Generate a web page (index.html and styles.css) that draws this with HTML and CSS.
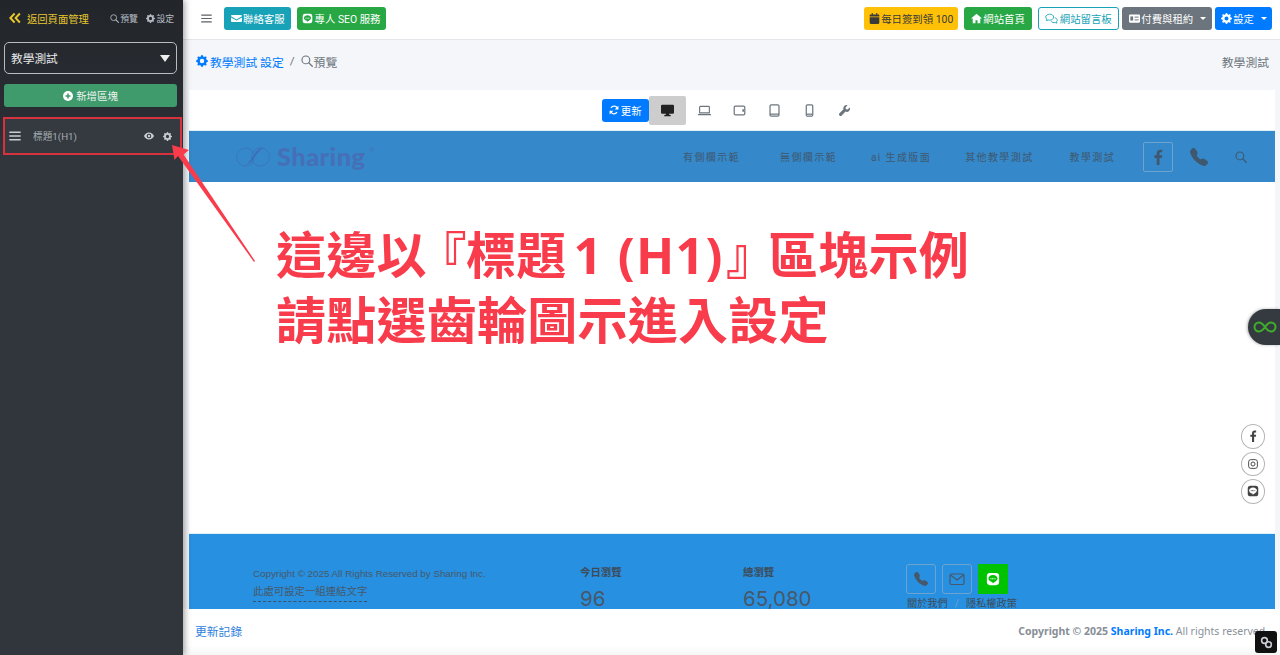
FILE: index.html
```html
<!DOCTYPE html>
<html lang="zh-Hant">
<head>
<meta charset="utf-8">
<title>教學測試 設定</title>
<link rel="stylesheet" href="styles.css">
</head>
<body>
<svg class="sprite" aria-hidden="true">
  <symbol id="gear" viewBox="0 0 16 16"><path fill="currentColor" d="M9.405 1.05c-.413-1.4-2.397-1.4-2.81 0l-.1.34a1.464 1.464 0 0 1-2.105.872l-.31-.17c-1.283-.698-2.686.705-1.987 1.987l.169.311c.446.82.023 1.841-.872 2.105l-.34.1c-1.4.413-1.4 2.397 0 2.81l.34.1a1.464 1.464 0 0 1 .872 2.105l-.17.31c-.698 1.283.705 2.686 1.987 1.987l.311-.169a1.464 1.464 0 0 1 2.105.872l.1.34c.413 1.4 2.397 1.4 2.81 0l.1-.34a1.464 1.464 0 0 1 2.105-.872l.31.17c1.283.698 2.686-.705 1.987-1.987l-.169-.311a1.464 1.464 0 0 1 .872-2.105l.34-.1c1.4-.413 1.4-2.397 0-2.81l-.34-.1a1.464 1.464 0 0 1-.872-2.105l.17-.31c.698-1.283-.705-2.686-1.987-1.987l-.311.169a1.464 1.464 0 0 1-2.105-.872l-.1-.34zM8 10.93a2.929 2.929 0 1 1 0-5.86 2.929 2.929 0 0 1 0 5.858z"/></symbol>
  <symbol id="search" viewBox="0 0 16 16"><circle cx="6.5" cy="6.500" r="5.200" fill="none" stroke="currentColor" stroke-width="1.500"/><path d="M10.500 10.500L15 15" stroke="currentColor" stroke-width="1.800" stroke-linecap="round"/></symbol>
  <symbol id="phone" viewBox="0 0 16 16"><path fill="currentColor" d="M1.885.511a1.745 1.745 0 0 1 2.61.163L6.29 2.98c.329.423.445.974.315 1.494l-.547 2.19a.678.678 0 0 0 .178.643l2.457 2.457a.678.678 0 0 0 .644.178l2.189-.547a1.745 1.745 0 0 1 1.494.315l2.306 1.794c.829.645.905 1.87.163 2.611l-1.034 1.034c-.74.74-1.846 1.065-2.877.702a18.634 18.634 0 0 1-7.01-4.42 18.634 18.634 0 0 1-4.42-7.009c-.362-1.03-.037-2.137.703-2.877L1.885.511z"/></symbol>
  <symbol id="fb" viewBox="0 0 16 16"><path fill="currentColor" d="M9.500 16V9h2.300l.4-2.700H9.500V4.600c0-.8.2-1.300 1.300-1.300h1.400V.9C12 .9 11.100.8 10.200.8 8.100.8 6.700 2 6.700 4.300v2H4.400V9h2.300v7z"/></symbol>
  <symbol id="line" viewBox="0 0 16 16"><rect x="1" y="1" width="14" height="14" rx="3.500" fill="currentColor"/><path fill="var(--line-bubble, #fff)" d="M8 3.300c-2.900 0-5.200 1.800-5.200 4.100 0 2 1.900 3.700 4.300 4 .5.100.4.700.3 1.300 0 .2.100.3.400.2 1.300-.7 5.400-3.200 5.400-5.500 0-2.300-2.300-4.100-5.200-4.100z"/><path d="M5 7.600h6" stroke="currentColor" stroke-width="1.200" stroke-dasharray="1.300 .5"/></symbol>
  <symbol id="bars" viewBox="0 0 16 16"><path d="M1 3h14M1 8h14M1 13h14" stroke="currentColor" stroke-width="1.700" stroke-linecap="round"/></symbol>
</svg>

<div class="app">
  <aside class="side">
    <div class="side-top">
      <a class="back"><svg class="ic-back" viewBox="0 0 16 16"><path d="M7.500 2L1.800 8l5.700 6M14.500 2L8.800 8l5.700 6" fill="none" stroke="currentColor" stroke-width="2.600"/></svg>返回頁面管理</a>
      <span class="side-links">
        <a class="side-link"><svg class="ic9"><use href="#search"/></svg>預覽</a>
        <a class="side-link"><svg class="ic9"><use href="#gear"/></svg>設定</a>
      </span>
    </div>
    <div class="side-select"><span class="select-label">教學測試</span><i class="tri"></i></div>
    <a class="side-add"><svg class="ic10" viewBox="0 0 16 16"><circle cx="8" cy="8" r="8" fill="#fff"/><path d="M8 4v8M4 8h8" stroke="#3f9a6c" stroke-width="2.400"/></svg>新增區塊</a>
    <div class="side-item">
      <svg class="ic-bars"><use href="#bars"/></svg>
      <span class="item-name">標題1(H1)</span>
      <svg class="ic-eye" viewBox="0 0 16 12"><path fill="currentColor" d="M8 .5C4.500.5 1.500 2.700 0 6c1.500 3.300 4.500 5.500 8 5.500s6.500-2.200 8-5.500C14.500 2.700 11.500.5 8 .5zm0 9.200A3.700 3.700 0 1 1 8 2.300a3.700 3.700 0 0 1 0 7.400z"/><circle cx="8" cy="6" r="2" fill="currentColor"/></svg>
      <svg class="ic-item-gear"><use href="#gear"/></svg>
    </div>
  </aside>

  <main class="main">
    <header class="topbar">
      <svg class="ic-menu"><use href="#bars"/></svg>
      <a class="btn btn-info"><svg class="ic11" viewBox="0 0 16 16"><path fill="currentColor" d="M0 4.500A1.500 1.500 0 0 1 1.500 3h13A1.500 1.500 0 0 1 16 4.500v.3L8 9.300 0 4.800zM0 6.400v5.100A1.500 1.500 0 0 0 1.500 13h13a1.500 1.500 0 0 0 1.500-1.500V6.400l-8 4.500z"/></svg>聯絡客服</a>
      <a class="btn btn-green btn-seo"><svg class="ic11 line-green"><use href="#line"/></svg>專人 SEO 服務</a>
      <span class="top-spacer"></span>
      <a class="btn btn-yellow"><svg class="ic11" viewBox="0 0 16 16"><path fill="currentColor" d="M4 0h1.500v2h5V0H12v2h2a1 1 0 0 1 1 1v2H1V3a1 1 0 0 1 1-1h2zM1 6h14v8a2 2 0 0 1-2 2H3a2 2 0 0 1-2-2z"/></svg>每日簽到領 100</a>
      <a class="btn btn-green btn-home"><svg class="ic11" viewBox="0 0 16 16"><path fill="currentColor" d="M8 1L0 8h2.500v7h4v-4.500h3V15h4V8H16z"/></svg>網站首頁</a>
      <a class="btn btn-outline"><svg class="ic13" viewBox="0 0 18 16"><path d="M6.500 2C3.500 2 1 3.800 1 6c0 1.100.6 2 1.500 2.800L2 11l2.500-1c.6.200 1.300.3 2 .3 3 0 5.500-1.900 5.500-4.300S9.500 2 6.500 2z" fill="none" stroke="currentColor" stroke-width="1.200"/><path d="M13.500 7c2 .4 3.500 1.700 3.500 3.300 0 .9-.4 1.600-1 2.200l.4 2-2.200-.9c-2 .5-4.700 0-5.700-1.800" fill="none" stroke="currentColor" stroke-width="1.200"/></svg>網站留言板</a>
      <a class="btn btn-gray"><svg class="ic11" viewBox="0 0 16 12"><rect width="16" height="12" rx="1.500" fill="currentColor"/><rect x="2" y="3" width="4" height="6" fill="#6c757d"/><path d="M8 4h6M8 8h6" stroke="#6c757d" stroke-width="1.400"/></svg>付費與租約<i class="caret"></i></a>
      <a class="btn btn-blue btn-end"><svg class="ic11"><use href="#gear"/></svg>設定<i class="caret"></i></a>
    </header>

    <div class="crumbs">
      <nav class="crumb-left">
        <a class="crumb-link"><svg class="ic12"><use href="#gear"/></svg>教學測試 設定</a>
        <span class="crumb-sep">/</span>
        <span class="crumb-cur"><svg class="ic12"><use href="#search"/></svg>預覽</span>
      </nav>
      <span class="crumb-right">教學測試</span>
    </div>

    <section class="preview">
      <div class="devices">
        <a class="btn btn-blue refresh"><svg class="ic10" viewBox="0 0 16 16"><path d="M14 6.500A6 6 0 0 0 3.200 4.500M2 9.500a6 6 0 0 0 10.800 2" fill="none" stroke="currentColor" stroke-width="2"/><path fill="currentColor" d="M15 1v6h-6zM1 15V9h6z"/></svg>更新</a>
        <span class="dev dev-on"><svg class="ic13" viewBox="0 0 16 14"><path fill="currentColor" d="M1.500 0h13A1.500 1.500 0 0 1 16 1.500v8a1.500 1.500 0 0 1-1.500 1.500H10l.4 1.500H12V14H4v-1.500h1.600L6 11H1.500A1.500 1.500 0 0 1 0 9.500v-8A1.500 1.500 0 0 1 1.500 0z"/></svg></span>
        <span class="dev"><svg class="ic13" viewBox="0 0 16 12"><path d="M3 1h10a1 1 0 0 1 1 1v7H2V2a1 1 0 0 1 1-1zM0 11h16" fill="none" stroke="currentColor" stroke-width="1.400"/></svg></span>
        <span class="dev"><svg class="ic13" viewBox="0 0 16 13"><rect x="1.500" y="1" width="13" height="11" rx="1.500" fill="none" stroke="currentColor" stroke-width="1.500"/><path d="M12.500 5v3" stroke="currentColor" stroke-width="2"/></svg></span>
        <span class="dev"><svg class="ic13" viewBox="0 0 16 16"><rect x="2.500" y="1" width="11" height="14" rx="1.500" fill="none" stroke="currentColor" stroke-width="1.500"/><path d="M2.500 12.500h11" stroke="currentColor" stroke-width="1.500"/></svg></span>
        <span class="dev"><svg class="ic13" viewBox="0 0 16 16"><rect x="4" y="1" width="8" height="14" rx="1.500" fill="none" stroke="currentColor" stroke-width="1.500"/><path d="M4 12.500h8" stroke="currentColor" stroke-width="1.500"/></svg></span>
        <span class="dev"><svg class="ic11" viewBox="0 0 16 16"><path fill="currentColor" d="M15.500 3.500l-3 3-2.500-.5-.5-2.500 3-3a4.500 4.500 0 0 0-6 5.500L.7 12a2.300 2.300 0 0 0 3.300 3.300l5.500-5.800a4.500 4.500 0 0 0 6-6z"/></svg></span>
      </div>

      <div class="site-nav">
        <a class="logo"><svg class="logo-mark" viewBox="0 0 36 20"><circle cx="10.500" cy="10" r="9" fill="none" stroke="#3f6bb5" stroke-width=".6"/><circle cx="25.500" cy="10" r="9" fill="none" stroke="#3f6bb5" stroke-width=".6"/><path d="M7 19.500C16 19.500 19 .5 29 .5 21 4 18 18 7 19.500z" fill="#3f6bb5"/></svg><span class="logo-text">Sharing</span><sup class="logo-r">®</sup></a>
        <ul class="site-menu">
          <li>有側欄示範</li>
          <li>無側欄示範</li>
          <li>ai 生成版面</li>
          <li>其他教學測試</li>
          <li>教學測試</li>
        </ul>
        <span class="nav-fb"><svg class="ic16"><use href="#fb"/></svg></span>
        <svg class="nav-phone"><use href="#phone"/></svg>
        <svg class="nav-search"><use href="#search"/></svg>
      </div>

      <div class="site-body"></div>

      <footer class="site-foot">
        <div class="foot-copy">
          <p class="foot-line">Copyright © 2025 All Rights Reserved by Sharing Inc.</p>
          <a class="foot-link">此處可設定一組連結文字</a>
        </div>
        <div class="foot-stat foot-today"><b>今日瀏覽</b><span>96</span></div>
        <div class="foot-stat foot-total"><b>總瀏覽</b><span>65,080</span></div>
        <div class="foot-right">
          <div class="foot-icons">
            <span class="foot-ic"><svg class="ic14"><use href="#phone"/></svg></span>
            <span class="foot-ic"><svg class="ic16" viewBox="0 0 16 16"><rect x="1" y="3" width="14" height="10.500" rx="1.500" fill="none" stroke="currentColor" stroke-width="1.200"/><path d="M1.500 4l6.500 5 6.500-5" fill="none" stroke="currentColor" stroke-width="1.200"/></svg></span>
            <span class="foot-ic foot-line-ic"><svg class="ic14"><use href="#line"/></svg></span>
          </div>
          <div class="foot-nav"><span>關於我們</span><i>/</i><span>隱私權政策</span></div>
        </div>
      </footer>
    </section>

    <footer class="bottombar">
      <a class="log-link">更新記錄</a>
      <span class="rights"><b>Copyright © 2025 <a>Sharing Inc.</a></b> All rights reserved.</span>
    </footer>
  </main>
</div>

<aside class="inf-tab"><svg viewBox="0 0 24 12"><path d="M12 6C9.500 2.500 7.800 1.500 6 1.500a4.500 4.500 0 0 0 0 9c1.800 0 3.500-1 6-4.500s4.200-4.500 6-4.500a4.500 4.500 0 0 1 0 9c-1.800 0-3.500-1-6-4.500z" fill="none" stroke="#3fae2a" stroke-width="2"/></svg></aside>

<div class="socials">
  <span class="soc"><svg class="ic12"><use href="#fb"/></svg></span>
  <span class="soc"><svg class="ic10" viewBox="0 0 16 16"><rect x="1" y="1" width="14" height="14" rx="3.500" fill="none" stroke="currentColor" stroke-width="1.500"/><circle cx="8" cy="8" r="3.200" fill="none" stroke="currentColor" stroke-width="1.500"/></svg></span>
  <span class="soc"><svg class="ic12 line-white"><use href="#line"/></svg></span>
</div>

<div class="widget"><svg viewBox="0 0 16 16"><circle cx="5.500" cy="5.500" r="3.500" fill="none" stroke="#c9ced4" stroke-width="2"/><circle cx="10.500" cy="10.500" r="3.500" fill="none" stroke="#c9ced4" stroke-width="2"/></svg></div>

<svg class="note-arrow" viewBox="0 0 1280 655"><path fill="#f93c4c" d="M172 145L189 150 183.500 154.500 255 261 254 262 178 156 174.500 160z"/></svg>
<div class="note-text">這邊以<span class="note-open">『</span>標題<span class="note-latin">1 (H1)</span><span class="note-close">』</span>區塊示例<br>請點選齒輪圖示進入設定</div>
</body>
</html>
```
FILE: styles.css
```css
* { box-sizing: border-box; }
html, body { margin: 0; height: 655px; overflow: hidden; }
body {
  position: relative;
  font-family: Roboto, "Noto Sans CJK TC", "Liberation Sans", sans-serif;
  font-size: 10.4px;
  color: #495057;
  background: #f4f6f9;
}
p, ul { margin: 0; padding: 0; }
li { list-style: none; }
a { color: inherit; text-decoration: none; }
svg { display: block; flex: none; }
.sprite { position: absolute; width: 0; height: 0; }

.ic9 { width: 9px; height: 9px; }
.ic10 { width: 10px; height: 10px; }
.ic11 { width: 11px; height: 11px; }
.ic12 { width: 12px; height: 12px; }
.ic13 { width: 13px; height: 13px; }
.ic14 { width: 14px; height: 14px; }
.ic16 { width: 16px; height: 16px; }
.line-green { --line-bubble: #28a745; color: #fff; }
.line-white { --line-bubble: #fff; }

.app { display: flex; height: 655px; }

/* sidebar */
.side {
  width: 183px;
  flex: none;
  color: #c2c7d0;
  box-shadow: 2px 0 6px rgba(0, 0, 0, .35);
  position: relative;
  z-index: 2;
  padding: 0 6px 0 4px;
  display: flex;
  flex-direction: column;
  background: linear-gradient(#22262b 0, #2a2e34 120px, #31363c 160px);
}
.side-top {
  height: 36px;
  display: flex;
  align-items: center;
  justify-content: space-between;
  padding: 0 3px 0 5px;
}
.back { display: flex; align-items: center; color: #e8c72e; gap: 6px; font-size: 10.3px; }
.ic-back { width: 12px; height: 12px; }
.side-links { display: flex; gap: 8px; }
.side-link { display: flex; align-items: center; gap: 1.500px; font-size: 8.800px; color: #b8bcc2; }
.side-select {
  margin-top: 6px;
  height: 32px;
  border: 1px solid #b9bdc2;
  border-radius: 5px;
  display: flex;
  align-items: center;
  justify-content: space-between;
  padding: 0 6px;
  font-size: 11.700px;
  color: #e6e8ea;
}
.select-label { margin-top: -2px; }
.tri {
  width: 0;
  height: 0;
  border-left: 5px solid transparent;
  border-right: 5px solid transparent;
  border-top: 7px solid #eee;
}
.side-add {
  margin-top: 10px;
  height: 23px;
  background: #3f9a6c;
  border-radius: 3px;
  color: #eef4f0;
  display: flex;
  align-items: center;
  justify-content: center;
  gap: 3px;
}
.side-item {
  margin: 10px -5px 0 -1px;
  height: 38px;
  border: 2px solid #d8323f;
  background: #343a40;
  display: flex;
  align-items: center;
  padding: 0 8px 0 4px;
  color: #a9aeb4;
  font-size: 9.700px;
}
.ic-bars { width: 12px; height: 12px; color: #c9cdd1; }
.item-name { margin-left: 12px; flex: 1; }
.ic-eye { width: 10px; height: 8px; color: #c9cdd1; margin-right: 9px; }
.ic-item-gear { width: 9px; height: 9px; color: #c9cdd1; }

/* main */
.main { flex: 1; min-width: 0; display: flex; flex-direction: column; }
.topbar {
  height: 40px;
  flex: none;
  background: #fff;
  border-bottom: 1px solid #e4e6e9;
  display: flex;
  align-items: center;
  padding: 0 8px 2px 18px;
  gap: 6px;
}
.ic-menu { width: 11px; height: 11px; color: #5c6268; margin-right: 6px; }
.top-spacer { flex: 1; }
.btn {
  height: 23px;
  border-radius: 3px;
  display: inline-flex;
  align-items: center;
  justify-content: center;
  padding: 0 6.500px;
  gap: 1.500px;
  white-space: nowrap;
  color: #fff;
}
.btn-info { background: #17a2b8; }
.btn-green { background: #28a745; }
.btn-seo { padding: 0 5px; }
.btn-home { padding: 0 7px; }
.btn-yellow { background: #ffc107; color: #3a3a3a; padding: 0 4.500px; }
.btn-outline { background: #fff; border: 1px solid #17a2b8; color: #17a2b8; }
.btn-gray { background: #6c757d; margin-left: -3px; }
.btn-blue { background: #007bff; }
.btn-end { margin-left: -3px; padding: 0 5.500px; }
.caret {
  width: 0;
  height: 0;
  margin-left: 5px;
  border-left: 3px solid transparent;
  border-right: 3px solid transparent;
  border-top: 3px solid currentColor;
}

.crumbs {
  height: 50px;
  flex: none;
  display: flex;
  align-items: center;
  justify-content: space-between;
  padding: 0 11px 8px 13px;
  font-size: 11.800px;
}
.crumb-left { display: flex; align-items: center; gap: 6px; }
.crumb-link { display: flex; align-items: center; gap: 2px; color: #007bff; }
.crumb-sep { color: #6c757d; }
.crumb-cur { display: flex; align-items: center; gap: 1px; color: #6c757d; }
.crumb-right { color: #6c757d; }

.preview {
  flex: 1;
  min-height: 0;
  margin: 0 5px 0 6px;
  background: #fff;
  display: flex;
  flex-direction: column;
  overflow: hidden;
}
.devices {
  height: 41px;
  flex: none;
  display: flex;
  align-items: center;
  justify-content: center;
  border-bottom: 1px solid #dff0f7;
}
.refresh { width: 47px; padding: 0; }
.dev {
  width: 35px;
  height: 29px;
  display: flex;
  align-items: center;
  justify-content: center;
  color: #6c757d;
  border-radius: 2px;
}
.dev-on { width: 37px; margin-right: 1px; background: #cdcdcd; color: #222; }

.site-nav {
  height: 51px;
  flex: none;
  background: #3588c9;
  display: flex;
  align-items: center;
  color: #3f5870;
  padding-left: 46px;
}
.logo { display: flex; align-items: center; gap: 6px; color: #4570b8; width: 132px; flex: none; }
.logo-mark { width: 36px; height: 20px; }
.logo-text { font-family: Lato, "Noto Sans", sans-serif; font-weight: 900; font-size: 25.500px; line-height: 1; letter-spacing: .4px; }
.logo-r { font-size: 6px; line-height: 1; margin: -14px 0 0 -2px; }
.site-menu { display: flex; margin-left: 316px; gap: 34px; font-size: 10px; letter-spacing: 1.400px; white-space: nowrap; }
.site-menu li:first-child { margin-right: 6px; }
.site-menu li:nth-child(4) { margin-right: 2px; }
.nav-fb {
  margin-left: 28px;
  width: 30px;
  height: 30px;
  border: 1px solid #6fa3cf;
  border-radius: 2px;
  display: flex;
  align-items: center;
  justify-content: center;
}
.nav-phone { width: 18px; height: 18px; margin-left: 17px; }
.nav-search { width: 12px; height: 12px; margin-left: 27px; }

.site-body { height: 352px; flex: none; border-bottom: 1px solid #dff0f7; }

.site-foot {
  flex: 1;
  min-height: 0;
  background: #2890e0;
  color: #46586a;
  display: flex;
  padding: 30px 0 0 64px;
  overflow: hidden;
}
.foot-copy { width: 327px; flex: none; padding-top: 2px; }
.foot-line { line-height: 16px; font-family: "Liberation Sans", sans-serif; font-size: 9.800px; }
.foot-link {
  display: inline-block;
  margin-top: 2px;
  padding-bottom: 1px;
  line-height: 16px;
  border-bottom: 1px dashed #3d5166;
}
.foot-stat { display: flex; flex-direction: column; flex: none; width: 163px; padding-top: 1px; }
.foot-stat b { line-height: 16px; color: #3d4b58; }
.foot-stat span { font-family: Inter, "Noto Sans", sans-serif; font-size: 20.500px; line-height: 28px; margin-top: 4px; color: #46586a; }
.foot-icons { display: flex; gap: 6px; }
.foot-ic {
  width: 30px;
  height: 30px;
  border: 1px solid #6fa3cf;
  border-radius: 3px;
  display: flex;
  align-items: center;
  justify-content: center;
}
.foot-line-ic { background: #00c300; border: 0; color: #fff; --line-bubble: #00c300; border-radius: 0; }
.foot-nav { display: flex; gap: 7px; margin: 2px 0 0 1px; font-size: 10.200px; line-height: 16px; color: #3d4b58; }
.foot-nav i { color: #6fa3cf; font-style: normal; }

.bottombar {
  height: 46px;
  flex: none;
  display: flex;
  align-items: center;
  justify-content: space-between;
  padding: 0 12px 3px 12px;
  color: #8a9199;
  background: linear-gradient(#fff 80%, #f6f6f6);
}
.log-link { color: #2f7fe0; font-size: 11.800px; }
.rights { font-family: "Noto Sans", sans-serif; font-size: 10.500px; }
.rights b { color: #868e96; }
.rights a { color: #007bff; }

/* floating */
.inf-tab {
  position: absolute;
  right: 0;
  top: 309px;
  width: 32px;
  height: 36px;
  background: #343a40;
  border-radius: 18px 0 0 18px;
  display: flex;
  align-items: center;
  justify-content: center;
  padding-left: 1px;
  box-shadow: -1px 0 3px rgba(0, 0, 0, .3);
  z-index: 3;
}
.inf-tab svg { width: 24px; height: 12px; }
.socials {
  position: absolute;
  left: 1241px;
  top: 424px;
  display: flex;
  flex-direction: column;
  gap: 3px;
  z-index: 3;
}
.soc {
  width: 24px;
  height: 24.500px;
  border: 1px solid #b5b5b5;
  border-radius: 50%;
  background: #fff;
  display: flex;
  align-items: center;
  justify-content: center;
  color: #444;
}
.widget {
  position: absolute;
  left: 1255px;
  top: 631px;
  width: 22px;
  height: 22px;
  background: #111;
  border-radius: 3px;
  display: flex;
  align-items: center;
  justify-content: center;
  z-index: 4;
}
.widget svg { width: 13px; height: 13px; }

/* annotation overlay */
.note-arrow {
  position: absolute;
  left: 0;
  top: 0;
  width: 1280px;
  height: 655px;
  z-index: 5;
  pointer-events: none;
}
.note-text {
  position: absolute;
  left: 276px;
  top: 221px;
  z-index: 5;
  font-family: "Noto Sans CJK TC", "Noto Sans", sans-serif;
  font-weight: 700;
  font-size: 50px;
  line-height: 62px;
  letter-spacing: .25px;
  color: #f93c4c;
  white-space: nowrap;
}
.note-open { font-feature-settings: "palt"; margin: 0 0 0 14px; }
.note-latin { font-family: "Noto Sans", sans-serif; letter-spacing: 1.300px; margin-left: 7px; }
.note-close { font-feature-settings: "palt"; margin: 0 16px 0 3px; }
```
